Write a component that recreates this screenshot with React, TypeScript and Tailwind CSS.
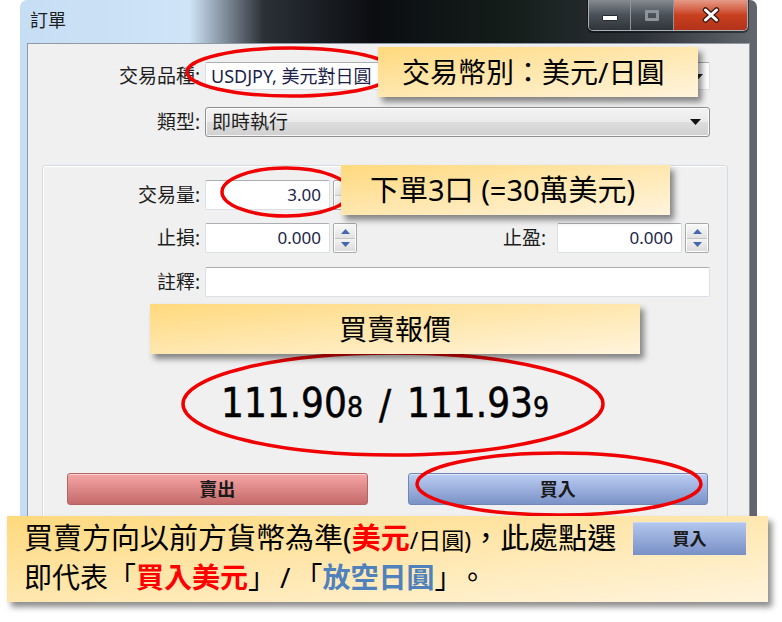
import React from "react";

const SpinArrow = ({ down }: { down?: boolean }) => (
  <svg width="9" height="5" viewBox="0 0 9 5">
    <path d={down ? "M0 0H9L4.5 5Z" : "M0 5H9L4.5 0Z"} fill="#4767ad" />
  </svg>
);

const Spinner = () => (
  <div className="ml-[3px] flex h-[30px] w-[24px] shrink-0 flex-col rounded-[2px] border border-[#a9a9a9] bg-white p-px">
    <div className="flex flex-1 items-center justify-center border-b border-[#c4c4c4] bg-linear-to-b from-[#f8f8f8] to-[#e2e2e2]">
      <SpinArrow />
    </div>
    <div className="flex flex-1 items-center justify-center bg-linear-to-b from-[#f3f3f3] to-[#dcdcdc]">
      <SpinArrow down />
    </div>
  </div>
);

const TextBox = ({ value, className }: { value?: string; className: string }) => (
  <div
    className={`flex h-[30px] shrink-0 items-center justify-end rounded-[2px] border border-[#dbe0e6] border-t-[#abadb3] bg-white pr-[8px] text-[17px] text-[#1c1f4a] ${className}`}
  >
    {value}
  </div>
);

const CaptionButtons = () => (
  <div className="mr-[2px] flex h-[31px] overflow-hidden rounded-b-[5px] border border-t-0 border-[#aab0b6] shadow-[0_1px_0_1px_rgba(0,0,0,0.45)]">
    <div className="flex w-[42px] items-center justify-center border-r border-[#8e949a] bg-linear-to-b from-[#858b91] via-[#4b5158] to-[#2f343a]">
      <div className="mt-[5px] h-[6px] w-[16px] rounded-[1px] border border-[#262b31] bg-white" />
    </div>
    <div className="flex w-[43px] items-center justify-center border-r border-[#8e949a] bg-linear-to-b from-[#858b91] via-[#4b5158] to-[#2f343a]">
      <div className="h-[11px] w-[14px] rounded-[1px] border-[3px] border-[#8d949b]" />
    </div>
    <div className="flex w-[73px] items-center justify-center bg-linear-to-b from-[#e69a86] via-[#c8401f] to-[#b3321a]">
      <svg width="20" height="16" viewBox="0 0 20 16">
        <path d="M4.5 3L15.5 13M15.5 3L4.5 13" stroke="#3b1a12" strokeWidth="5.5" strokeLinecap="round" />
        <path d="M4.5 3L15.5 13M15.5 3L4.5 13" stroke="#ffffff" strokeWidth="3" strokeLinecap="round" />
      </svg>
    </div>
  </div>
);

const Window = () => (
  <div className="ml-[20px] flex h-[592px] w-[737px] flex-col rounded-t-[7px] bg-[linear-gradient(90deg,#c6def4_0%,#cfe4f7_23%,#2b3037_33%,#0b0d11_48%,#141d1a_66%,#2d3137_84%,#62686e_100%)] px-[7px]">
    {/* title bar */}
    <div className="flex h-[43px] shrink-0 items-start justify-between">
      <span className="ml-[3px] mt-[7px] text-[18px] leading-[26px] text-[#1e1e1e]">訂單</span>
      <CaptionButtons />
    </div>

    {/* client area */}
    <div className="flex flex-1 flex-col border border-[#8f9aa6] bg-[#f0f0f0] pt-[18px]">
      <div className="flex h-[28px] items-center">
        <span className="w-[172px] text-right text-[19px]">交易品種:</span>
        <div className="ml-[5px] flex h-[28px] w-[505px] items-center justify-between rounded-[2px] border border-[#dbe0e6] border-t-[#abadb3] bg-white pl-[5px] pr-[6px] text-[18px] text-[#1c1f4a]">
          <span>USDJPY, 美元對日圓</span>
          <svg width="9" height="5" viewBox="0 0 9 5">
            <path d="M0 0H9L4.5 5Z" fill="#222" />
          </svg>
        </div>
      </div>

      <div className="mt-[17px] flex h-[30px] items-center">
        <span className="w-[172px] text-right text-[19px]">類型:</span>
        <div className="ml-[5px] flex h-[30px] w-[505px] items-center justify-between rounded-[3px] border border-[#8e8f8f] bg-[linear-gradient(#f3f3f3,#ebebeb_48%,#dddddd_52%,#d0d0d0)] pl-[6px] pr-[8px] text-[19px] shadow-[inset_0_0_0_1px_rgba(255,255,255,0.8)]">
          <span>即時執行</span>
          <svg width="11" height="6" viewBox="0 0 11 6">
            <path d="M0 0H11L5.5 6Z" fill="#111" />
          </svg>
        </div>
      </div>

      {/* group box */}
      <div className="ml-[14px] mr-[21px] mt-[28px] flex flex-1 flex-col rounded-[3px] border border-[#d3dbe2] pt-[14px] shadow-[inset_1px_1px_0_#ffffff]">
        <div className="flex h-[30px] items-center">
          <span className="w-[157px] text-right text-[19px]">交易量:</span>
          <TextBox value="3.00" className="ml-[5px] w-[125px]" />
          <Spinner />
        </div>

        <div className="mt-[13px] flex h-[30px] items-center">
          <span className="w-[157px] text-right text-[19px]">止損:</span>
          <TextBox value="0.000" className="ml-[5px] w-[125px]" />
          <Spinner />
          <span className="ml-auto text-[19px]">止盈:</span>
          <TextBox value="0.000" className="ml-[11px] w-[125px]" />
          <Spinner />
          <span className="w-[18px]" />
        </div>

        <div className="mt-[14px] flex h-[30px] items-center">
          <span className="w-[157px] text-right text-[19px]">註釋:</span>
          <TextBox className="ml-[5px] w-[505px]" />
        </div>

        <div className="mt-[84px] flex h-[48px] items-center justify-center font-['DejaVu_Sans_Condensed','DejaVu_Sans',sans-serif] text-[40px] leading-[48px] text-black font-stretch-condensed [-webkit-text-stroke:0.5px_black]">
          <span>
            111.90<span className="text-[28px]">8</span>
          </span>
          <span className="mx-[16px]">/</span>
          <span>
            111.93<span className="text-[28px]">9</span>
          </span>
        </div>

        <div className="mt-[44px] grid h-[32px] grid-cols-2 gap-[40px] pl-[24px] pr-[19px]">
          <div className="flex items-center justify-center rounded-[3px] border border-[#b56464] bg-linear-to-b from-[#f6a6a6] to-[#c46a6a] text-[18px] font-bold text-[#1a1a1a] shadow-[inset_0_1px_0_rgba(255,255,255,0.5)]">
            賣出
          </div>
          <div className="flex items-center justify-center rounded-[3px] border border-[#6f86b6] bg-linear-to-b from-[#bccef3] to-[#7b92c7] text-[18px] font-bold text-[#1a1a1a] shadow-[inset_0_1px_0_rgba(255,255,255,0.5)]">
            買入
          </div>
        </div>
      </div>
    </div>
  </div>
);

const Callout = ({ className, children }: { className: string; children: React.ReactNode }) => (
  <div
    className={`absolute flex items-center bg-linear-to-br from-[#ffd97c] to-[#fff4dc] text-black shadow-[4px_5px_6px_rgba(0,0,0,0.45)] ${className}`}
  >
    {children}
  </div>
);

export default function App() {
  return (
    <div className="relative h-[622px] w-[782px] overflow-hidden bg-white font-['Noto_Sans','Noto_Sans_CJK_TC',sans-serif] text-[#1e1e1e]">
      <Window />

      <svg className="pointer-events-none absolute left-0 top-0" width="782" height="622">
        <g fill="none" stroke="#f00000" strokeWidth="3.5">
          <ellipse cx="291" cy="72" rx="104" ry="24" />
          <ellipse cx="286" cy="192" rx="64" ry="24" />
          <ellipse cx="393" cy="404" rx="210" ry="51" />
          <ellipse cx="559" cy="484" rx="142" ry="31" />
        </g>
      </svg>

      <Callout className="left-[378px] top-[47px] h-[50px] w-[320px] pl-[24px] text-[28px]">交易幣別：美元/日圓</Callout>
      <Callout className="left-[341px] top-[165px] h-[50px] w-[329px] pl-[29px] text-[29px]">下單3口 (=30萬美元)</Callout>
      <Callout className="left-[150px] top-[304px] h-[50px] w-[490px] justify-center text-[28px]">買賣報價</Callout>

      {/* bottom note */}
      <div className="absolute left-[7px] top-[516px] flex h-[86px] w-[761px] flex-col bg-linear-to-br from-[#ffd97c] to-[#fff4dc] pl-[17px] pt-[6px] text-black shadow-[4px_5px_6px_rgba(0,0,0,0.45)]">
        <div className="flex h-[33px] items-center">
          <span className="whitespace-nowrap text-[29px] leading-[33px]">
            買賣方向以前方貨幣為準(<span className="font-bold text-[#ff0000]">美元</span>
            <span className="text-[23px]">/日圓)</span>，此處點選
          </span>
          <div className="ml-auto mr-[22px] flex h-[33px] w-[113px] items-center justify-center border-t border-[#c9d8f6] bg-linear-to-b from-[#b3c6ee] to-[#7990c6] text-[17px] font-bold text-[#1a1a1a]">
            買入
          </div>
        </div>
        <div className="mt-[2px] whitespace-nowrap text-[28px] leading-[40px]">
          即代表「<span className="font-bold text-[#ff0000]">買入美元</span>」<span className="mx-[4px]">/</span>「
          <span className="font-bold text-[#4f81bd]">放空日圓</span>」<span className="ml-[10px]">。</span>
        </div>
      </div>
    </div>
  );
}
